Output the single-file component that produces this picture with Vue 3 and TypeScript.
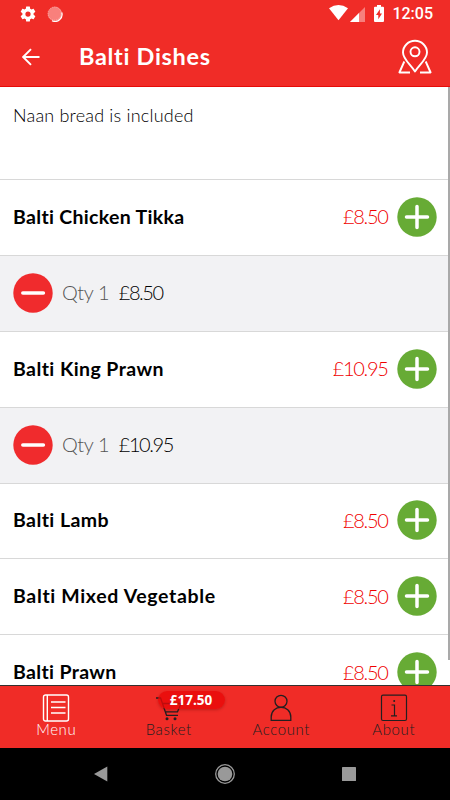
<script setup lang="ts">
interface Dish {
  name: string
  price: string
  tracking: number
  qty?: number
}

const dishes: Dish[] = [
  { name: 'Balti Chicken Tikka', price: '£8.50', tracking: 0.32, qty: 1 },
  { name: 'Balti King Prawn', price: '£10.95', tracking: 0.42, qty: 1 },
  { name: 'Balti Lamb', price: '£8.50', tracking: 0.42 },
  { name: 'Balti Mixed Vegetable', price: '£8.50', tracking: 0.65 },
  { name: 'Balti Prawn', price: '£8.50', tracking: 0.34 },
]
</script>

<template>
  <div class="screen">
    <header class="header">
      <div class="status">
        <div class="status-group left">
          <svg class="gear" width="18" height="18" viewBox="0 0 24 24">
            <path fill="#fff" d="M19.43 12.98c.04-.32.07-.64.07-.98s-.03-.66-.07-.98l2.11-1.65c.19-.15.24-.42.12-.64l-2-3.46c-.12-.22-.39-.3-.61-.22l-2.49 1c-.52-.4-1.08-.73-1.69-.98l-.38-2.65A.488.488 0 0 0 14 2h-4c-.25 0-.46.18-.49.42l-.38 2.65c-.61.25-1.17.59-1.69.98l-2.49-1c-.23-.09-.49 0-.61.22l-2 3.46c-.13.22-.07.49.12.64l2.11 1.65c-.04.32-.07.65-.07.98s.03.66.07.98l-2.11 1.65c-.19.15-.24.42-.12.64l2 3.46c.12.22.39.3.61.22l2.49-1c.52.4 1.08.73 1.69.98l.38 2.65c.03.24.24.42.49.42h4c.25 0 .46-.18.49-.42l.38-2.65c.61-.25 1.17-.59 1.69-.98l2.49 1c.23.09.49 0 .61-.22l2-3.46c.12-.22.07-.49-.12-.64l-2.11-1.65zM12 15.500a3.500 3.500 0 1 1 0-7 3.500 3.500 0 0 1 0 7z" />
          </svg>
          <svg width="16" height="16" viewBox="0 0 16 16">
            <circle cx="8" cy="8" r="7.2" fill="#f8807c" />
            <circle cx="7.6" cy="7.6" r="6.6" fill="none" stroke="#fbb0ad" stroke-width="1" stroke-dasharray="1 1" />
            <path d="M14.8 6.5A7 7 0 0 1 5 14.7" fill="none" stroke="#fff" stroke-width="1.2" />
          </svg>
        </div>
        <div class="status-group right">
          <svg class="wifi" width="19" height="16" viewBox="0 0 19 16">
            <path fill="#fff" d="M0 3.2Q9.5 -3 19 3.2L9.5 15.3z" />
          </svg>
          <svg class="signal" width="15" height="15" viewBox="0 0 15 15">
            <path fill="#f77f7c" d="M15 0v15H0z" />
            <path fill="#fff" d="M9 6v9H0z" />
          </svg>
          <svg class="battery" width="10" height="17" viewBox="0 0 10 17">
            <path fill="#fff" fill-rule="evenodd" d="M3 0h4v1.7h2q1 0 1 1V16q0 1-1 1H1q-1 0-1-1V2.700q0-1 1-1h2zM5.900 4.300L2 10h2.300v4.200L8 8.500H5.900z" />
          </svg>
          <span class="clock">12:05</span>
        </div>
      </div>
      <div class="toolbar">
        <svg class="back" width="18" height="18" viewBox="0 0 18 18">
          <path d="M17.500 9H1.300M9 1.200L1.200 9L9 16.800" fill="none" stroke="#fff" stroke-width="1.900" />
        </svg>
        <h1 class="title">Balti Dishes</h1>
        <svg class="map" width="34" height="36" viewBox="0 0 34 36">
          <g fill="none" stroke="#fff" stroke-width="1.900" stroke-linejoin="round">
            <path d="M17 32.500C12 25 5 20 5 13.500A12 11.700 0 0 1 29 13.500C29 20 22 25 17 32.500z" />
            <circle cx="17" cy="12.800" r="4.500" />
            <path d="M6.300 22.500L1.400 33.500H12M27.700 22.500l4.900 11H22" />
          </g>
        </svg>
      </div>
    </header>

    <main class="list">
      <p class="notice">Naan bread is included</p>
      <template v-for="dish in dishes" :key="dish.name">
        <div class="row">
          <span class="name" :style="{ letterSpacing: dish.tracking + 'px' }">{{ dish.name }}</span>
          <span class="price">{{ dish.price }}</span>
          <svg class="round" width="40" height="40" viewBox="0 0 40 40">
            <circle cx="20" cy="20" r="19.700" fill="#67ab35" />
            <path d="M9.500 20h21M20 9.500v21" stroke="#fff" stroke-width="3.500" stroke-linecap="round" />
          </svg>
        </div>
        <div v-if="dish.qty" class="row chosen">
          <svg class="round" width="40" height="40" viewBox="0 0 40 40">
            <circle cx="20" cy="20" r="19.700" fill="#f02b2d" />
            <path d="M9.800 20h20.600" stroke="#fff" stroke-width="3.500" stroke-linecap="round" />
          </svg>
          <span class="qty">Qty {{ dish.qty }}</span>
          <span class="amount">{{ dish.price }}</span>
        </div>
      </template>
      <div class="scrollbar"></div>
    </main>

    <nav class="tabs">
      <div class="tab active">
        <svg width="28" height="28" viewBox="0 0 28 28" fill="none" stroke="currentColor" stroke-width="1.400">
          <rect x="1.500" y="1" width="25" height="26" rx="2" />
          <path d="M5.300 1v26M9 8h14.500M9 13.500h14.500M9 19h14.500" />
        </svg>
        <span>Menu</span>
      </div>
      <div class="tab">
        <svg width="28" height="28" viewBox="0 0 28 28" fill="none" stroke="currentColor" stroke-width="1.300">
          <path d="M1 4h4.600L11.500 21.300H23M7.500 9.500H26L22.500 17.800H10.200" />
          <circle cx="12" cy="24.700" r="1.500" fill="currentColor" stroke="none" />
          <circle cx="20" cy="24.700" r="1.500" fill="currentColor" stroke="none" />
        </svg>
        <span>Basket</span>
        <b class="badge">£17.50</b>
      </div>
      <div class="tab">
        <svg width="28" height="28" viewBox="0 0 28 28" fill="none" stroke="currentColor" stroke-width="1.300">
          <circle cx="14" cy="7.300" r="6" />
          <path d="M4.200 26.300V23C4.200 10 23.800 10 23.800 23v3.300z" />
        </svg>
        <span>Account</span>
      </div>
      <div class="tab">
        <svg width="28" height="28" viewBox="0 0 28 28" fill="none" stroke="currentColor" stroke-width="1.200">
          <rect x="1.500" y="1.200" width="25" height="25.300" rx="1.500" />
          <path d="M11.500 11h3v10.800M11 21.800h6" />
          <circle cx="14.200" cy="7" r="1" fill="currentColor" stroke="none" />
        </svg>
        <span>About</span>
      </div>
    </nav>

    <footer class="system">
      <svg width="14" height="16" viewBox="0 0 14 16"><path fill="#999" d="M0 8L13.300 .5v15z" /></svg>
      <svg width="20" height="20" viewBox="0 0 20 20">
        <circle cx="10" cy="10" r="9.300" fill="none" stroke="#999" stroke-width="1.300" />
        <circle cx="10" cy="10" r="7.300" fill="#999" />
      </svg>
      <svg width="14" height="14" viewBox="0 0 14 14"><rect width="14" height="14" rx=".6" fill="#999" /></svg>
    </footer>
  </div>
</template>

<style>
body {
  margin: 0;
}
</style>

<style scoped>
.screen {
  width: 450px;
  height: 800px;
  display: flex;
  flex-direction: column;
  overflow: hidden;
  background: #fff;
  font-family: Lato, 'Open Sans', sans-serif;
  color: #000;
}
svg {
  display: block;
  flex: none;
}
.header {
  box-sizing: border-box;
  flex: none;
  height: 87px;
  background: #f02c27;
  border-bottom: 1px solid #e60b08;
}
.status {
  height: 27px;
  display: flex;
  justify-content: space-between;
  padding: 0 17px 0 19px;
}
.status-group {
  display: flex;
  align-items: center;
}
.left {
  gap: 10px;
}
.right {
  gap: 2px;
}
.wifi {
  margin-top: -1px;
}
.signal {
  margin-top: 1px;
}
.battery {
  margin-left: 7px;
  margin-top: -1px;
}
.clock {
  font: 500 16px/27px Roboto, sans-serif;
  color: #fff;
  margin-left: 6px;
}
.toolbar {
  height: 59px;
  display: flex;
  align-items: center;
  padding: 0 18px 0 22px;
}
.title {
  flex: 1;
  margin: -2px 0 0 39px;
  font-size: 23.5px;
  line-height: 30px;
  font-weight: 700;
  letter-spacing: 0.68px;
  color: #fff;
}
.list {
  position: relative;
  flex: 1;
  min-height: 0;
  overflow: hidden;
}
.notice {
  box-sizing: border-box;
  height: 92px;
  margin: 0;
  padding: 15px 13px;
  font-size: 18px;
  line-height: 26px;
  font-weight: 300;
  letter-spacing: 0.2px;
}
.row {
  box-sizing: border-box;
  height: 75.88px;
  display: flex;
  align-items: center;
  padding: 0 13px 1px 13px;
  border-top: 1px solid #d8d8d8;
}
.chosen {
  background: #f2f2f4;
}
.name {
  flex: 1;
  font-size: 19.5px;
  line-height: 26px;
  font-weight: 700;
}
.price {
  margin-right: 9.5px;
  font-size: 20px;
  line-height: 26px;
  font-weight: 300;
  letter-spacing: -1.3px;
  color: #f00000;
}
.qty {
  margin-left: 9px;
  font-size: 20px;
  line-height: 26px;
  font-weight: 300;
  letter-spacing: -0.4px;
  color: #555;
}
.amount {
  margin-left: 9.5px;
  font-size: 20px;
  line-height: 26px;
  font-weight: 300;
  letter-spacing: -1.4px;
}
.price,
.qty,
.amount {
  padding-bottom: 1px;
}
.scrollbar {
  position: absolute;
  top: 0;
  right: 0;
  width: 2px;
  height: 573px;
  background: #a9a9a9;
}
.tabs {
  box-sizing: border-box;
  flex: none;
  height: 63px;
  display: grid;
  grid-template-columns: repeat(4, 1fr);
  background: #f02c27;
  border-top: 1px solid #33302f;
}
.tab {
  position: relative;
  display: flex;
  flex-direction: column;
  align-items: center;
  padding-top: 8px;
  font-size: 15px;
  line-height: 15px;
  font-weight: 300;
  letter-spacing: 0.6px;
  color: #231f20;
}
.active {
  color: #fff;
}
.badge {
  position: absolute;
  left: 45px;
  top: 5px;
  width: 67px;
  height: 18px;
  border-radius: 9px;
  background: rgba(232, 8, 8, 0.78);
  box-shadow: 0 1px 3px rgba(80, 0, 0, 0.3);
  color: #fff;
  font: 700 13.5px/18px 'Open Sans', sans-serif;
  letter-spacing: 0;
  text-align: center;
}
.system {
  flex: none;
  height: 52px;
  display: flex;
  align-items: center;
  justify-content: space-between;
  padding: 0 94px;
  background: #000;
}
</style>
